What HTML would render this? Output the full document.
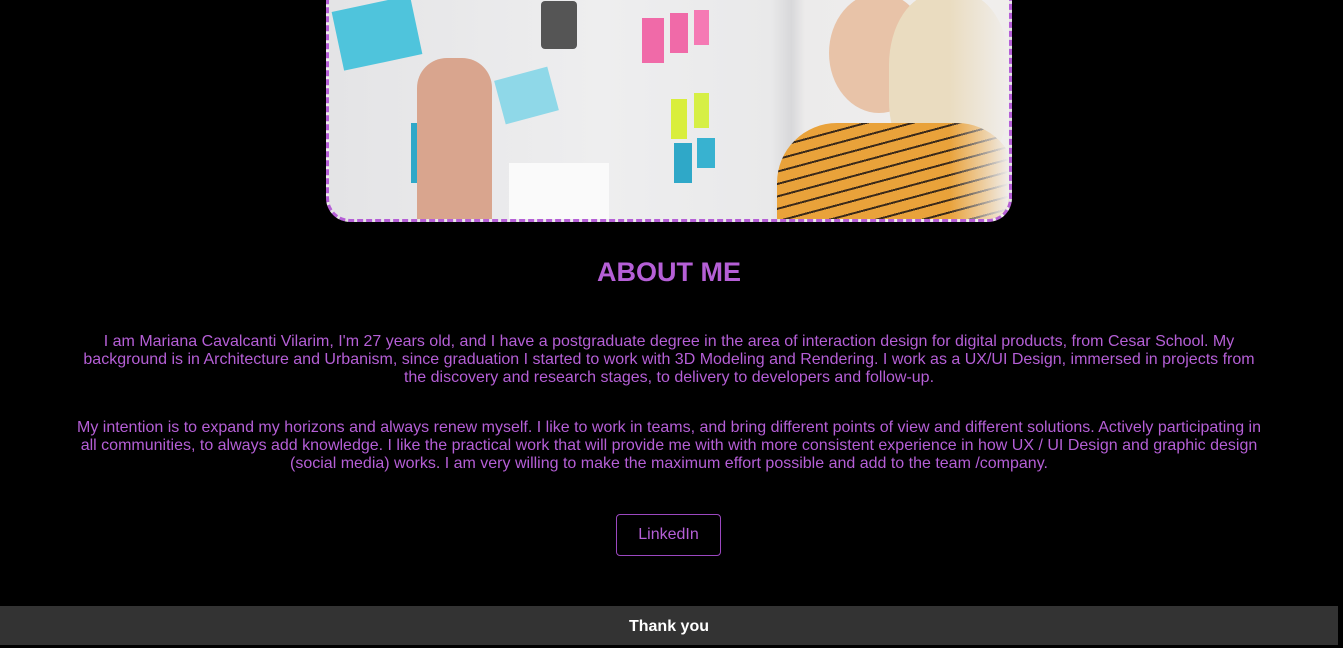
<!DOCTYPE html>
<html><head><meta charset="utf-8"><style>
html,body{margin:0;padding:0;background:#000;width:1343px;height:645px;overflow:hidden;font-family:"Liberation Sans",Arial,sans-serif;}
.img{position:absolute;left:326px;top:-30px;width:680px;height:246px;border:3px dashed #b55fd6;border-radius:24px;overflow:hidden;
background:linear-gradient(90deg,#e4e4e6 0%,#eeeeef 40%,#e9e9ea 65%,#d8d8da 68%,#ecebeb 70%,#f1efee 100%);}
.n{position:absolute;}
h2{position:absolute;top:257px;left:0;width:1338px;text-align:center;margin:0;color:#b55fd6;font-size:27px;font-weight:bold;}
p{position:absolute;left:74px;width:1190px;margin:0;text-align:center;color:#b55fd6;font-size:16px;line-height:18px;}
.btn{position:absolute;left:616px;top:514px;width:103px;height:40px;border:1px solid #9b48c0;border-radius:4px;color:#b55fd6;font-size:16px;line-height:40px;text-align:center;box-sizing:content-box;}
.foot{position:absolute;left:0;top:606px;width:1338px;height:39px;background:#333;color:#fff;font-weight:bold;font-size:16px;text-align:center;line-height:42px;}
</style></head><body>
<div class="img">
 <div class="n" style="left:8px;top:30px;width:80px;height:60px;background:#4fc4dc;transform:rotate(-12deg)"></div>
 <div class="n" style="left:170px;top:100px;width:55px;height:45px;background:#8fd8e8;transform:rotate(-15deg)"></div>
 <div class="n" style="left:82px;top:150px;width:22px;height:60px;background:#2fa8c8"></div>
 <div class="n" style="left:88px;top:85px;width:75px;height:170px;background:#d9a58e;border-radius:30px 30px 0 0"></div>
 <div class="n" style="left:212px;top:28px;width:36px;height:48px;background:#555;border-radius:4px"></div>
 <div class="n" style="left:313px;top:45px;width:22px;height:45px;background:#f06aa8"></div>
 <div class="n" style="left:341px;top:40px;width:18px;height:40px;background:#f06aa8"></div>
 <div class="n" style="left:365px;top:37px;width:15px;height:35px;background:#f579b4"></div>
 <div class="n" style="left:342px;top:126px;width:16px;height:40px;background:#d9ee3c"></div>
 <div class="n" style="left:365px;top:120px;width:15px;height:35px;background:#d6ef45"></div>
 <div class="n" style="left:345px;top:170px;width:18px;height:40px;background:#2fa8c8"></div>
 <div class="n" style="left:368px;top:165px;width:18px;height:30px;background:#38b2d0"></div>
 <div class="n" style="left:180px;top:190px;width:100px;height:80px;background:#fafafa"></div>
 <div class="n" style="left:500px;top:20px;width:100px;height:120px;background:#e8c3a8;border-radius:50%"></div>
 <div class="n" style="left:560px;top:20px;width:120px;height:180px;background:#eadcc0;border-radius:40%"></div>
 <div class="n" style="left:448px;top:150px;width:240px;height:110px;border-radius:60px 60px 0 0;background:repeating-linear-gradient(165deg,#e9a23a 0 10px,#3a2a1a 10px 12px)"></div>
 <div class="n" style="left:620px;top:0;width:60px;height:246px;background:linear-gradient(90deg,rgba(240,238,236,0),#f0eeec)"></div>
</div>
<h2>ABOUT ME</h2>
<p style="top:333px">I am Mariana Cavalcanti Vilarim, I'm 27 years old, and I have a postgraduate degree in the area of interaction design for digital products, from Cesar School. My background is in Architecture and Urbanism, since graduation I started to work with 3D Modeling and Rendering. I work as a UX/UI Design, immersed in projects from the discovery and research stages, to delivery to developers and follow-up.</p>
<p style="top:419px">My intention is to expand my horizons and always renew myself. I like to work in teams, and bring different points of view and different solutions. Actively participating in all communities, to always add knowledge. I like the practical work that will provide me with with more consistent experience in how UX / UI Design and graphic design (social media) works. I am very willing to make the maximum effort possible and add to the team /company.</p>
<div class="btn">LinkedIn</div>
<div class="foot">Thank you</div>
</body></html>
